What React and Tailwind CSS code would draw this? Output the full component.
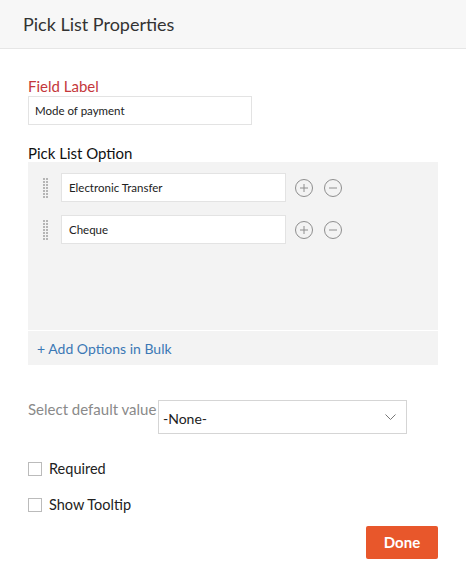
import React from "react";

const options = ["Electronic Transfer", "Cheque"];

function DragHandle() {
  const dots = [];
  for (let r = 0; r < 7; r++) {
    for (let c = 0; c < 2; c++) {
      dots.push(<rect key={`${r}-${c}`} x={c * 3} y={r * 3} width="2" height="2" fill="#b5b5b5" />);
    }
  }
  return (
    <svg width="5" height="20" viewBox="0 0 5 20" className="shrink-0">
      {dots}
    </svg>
  );
}

function CircleBtn({ plus }) {
  return (
    <svg width="20" height="20" viewBox="0 0 20 20" className="shrink-0">
      <circle cx="10" cy="10" r="8.5" fill="none" stroke="#8e8e8e" strokeWidth="1" />
      <line x1="6" y1="10" x2="14" y2="10" stroke="#8e8e8e" strokeWidth="1" />
      {plus && <line x1="10" y1="6" x2="10" y2="14" stroke="#8e8e8e" strokeWidth="1" />}
    </svg>
  );
}

export default function App() {
  return (
    <div className="w-[466px] h-[573px] bg-white text-[#222] font-['Lato','Open_Sans',sans-serif]">
      <div className="h-[49px] bg-[#f7f7f7] border-b border-[#e6e6e6] flex items-center px-[23px]">
        <h1 className="text-[18px] text-[#333]">Pick List Properties</h1>
      </div>

      <div className="px-[28px]">
        <div className="mt-[28px] text-[15px] leading-[18px] text-[#c4373b]">Field Label</div>
        <div className="mt-[1px] w-[224px] h-[29px] border border-[#e3e3e3] flex items-center px-[6px] text-[11.5px] text-[#222]">
          Mode of payment
        </div>

        <div className="mt-[19px] text-[15px] leading-[18px] text-[#111]">Pick List Option</div>

        <div className="w-[410px] bg-[#f3f3f3]">
          <div className="h-[168px] pt-[11px] flex flex-col gap-[13px]">
            {options.map((o) => (
              <div key={o} className="flex items-center">
                <div className="w-[33px] flex justify-end pr-[13px]">
                  <DragHandle />
                </div>
                <div className="w-[225px] h-[29px] bg-white border border-[#e3e3e3] flex items-center px-[7px] text-[11.5px] text-[#222]">
                  {o}
                </div>
                <div className="ml-[8px] flex gap-[9px]">
                  <CircleBtn plus />
                  <CircleBtn />
                </div>
              </div>
            ))}
          </div>
          <div className="h-[1px] bg-white" />
          <div className="h-[34px] flex items-center pl-[9px] text-[14px] text-[#3b78b5]">
            + Add Options in Bulk
          </div>
        </div>

        <div className="mt-[35px] flex items-start">
          <div className="w-[130px] text-[15px] leading-[18px] text-[#8a8a8a] whitespace-nowrap">Select default value</div>
          <div className="w-[249px] h-[34px] border border-[#d5d5d5] flex items-center justify-between pl-[4px] pr-[10px] text-[14px] text-[#222]">
            <span className="mt-[3px]">-None-</span>
            <svg width="11" height="7" viewBox="0 0 11 7">
              <polyline points="0.5,0.5 5.5,5.5 10.5,0.5" fill="none" stroke="#777" strokeWidth="1" />
            </svg>
          </div>
        </div>

        <div className="mt-[28px] h-[14px] flex items-center gap-[7px]">
          <div className="w-[14px] h-[14px] border border-[#bbb] bg-white" />
          <span className="text-[14.5px] text-[#222]">Required</span>
        </div>
        <div className="mt-[22px] h-[14px] flex items-center gap-[7px]">
          <div className="w-[14px] h-[14px] border border-[#bbb] bg-white" />
          <span className="text-[14.5px] text-[#222]">Show Tooltip</span>
        </div>

        <div className="mt-[14px] flex justify-end w-[410px]">
          <button className="w-[72px] h-[33px] rounded-[2px] bg-[#e8572b] text-white text-[15px] font-bold">
            Done
          </button>
        </div>
      </div>
    </div>
  );
}
